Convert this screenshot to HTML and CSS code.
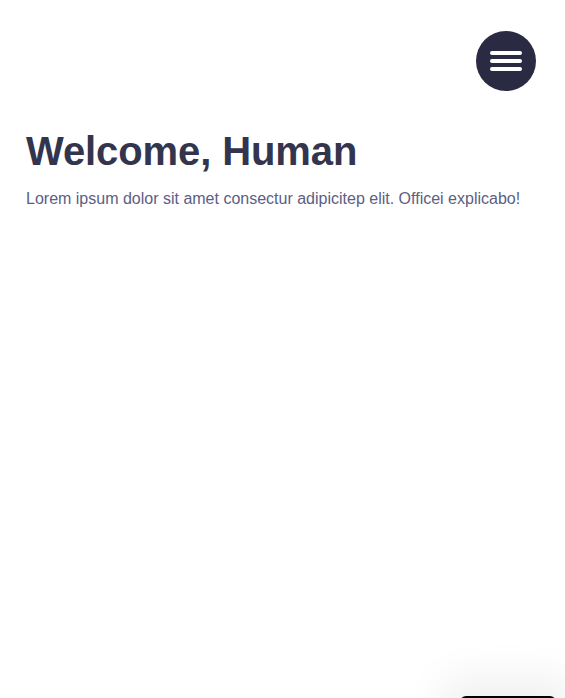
FILE: index.html
```html
<!DOCTYPE html>
<html lang="en">
<head>
<meta charset="utf-8">
<title>Welcome</title>
<link rel="stylesheet" href="styles.css">
</head>
<body>
<header class="topbar">
  <button class="menu-btn" aria-label="Menu">
    <svg width="32" height="20" viewBox="0 0 32 20"><g stroke="#fff" stroke-width="4" stroke-linecap="round"><line x1="2" y1="2" x2="30" y2="2"/><line x1="2" y1="10" x2="30" y2="10"/><line x1="2" y1="18" x2="30" y2="18"/></g></svg>
  </button>
</header>
<main class="content">
  <h1 class="title">Welcome, Human</h1>
  <p class="lead">Lorem ipsum dolor sit amet consectur adipicitep elit. Officei explicabo!</p>
</main>
<div class="toast"></div>
</body>
</html>
```
FILE: styles.css
```css
html, body { margin: 0; padding: 0; background: #fff; }
body { font-family: "Liberation Sans", Arial, sans-serif; height: 698px; overflow: hidden; position: relative; }
.topbar { display: flex; justify-content: flex-end; padding: 31px 29px 0 0; }
.menu-btn { width: 60px; height: 60px; border-radius: 50%; background: #2a2a42; border: 0; padding: 0; display: flex; align-items: center; justify-content: center; cursor: pointer; }
.content { padding: 0 26px; }
.title { margin: 37px 0 0; font-size: 40px; line-height: 46px; font-weight: 700; color: #33344d; letter-spacing: -0.1px; }
.lead { margin: 15px 0 0; font-size: 16px; line-height: 20px; color: #5c5e83; }
.toast { position: absolute; left: 460px; top: 696px; width: 96px; height: 60px; background: #000; border-radius: 6px; box-shadow: 0 0 40px 20px rgba(0,0,0,0.06); }
```
